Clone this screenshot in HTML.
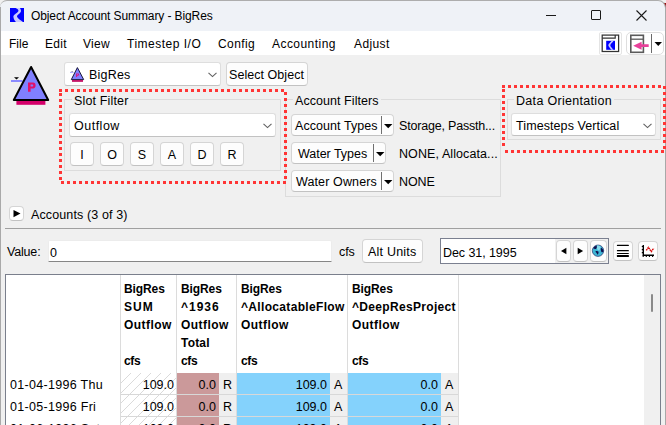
<!DOCTYPE html>
<html><head><meta charset="utf-8">
<style>
*{box-sizing:border-box;margin:0;padding:0}
html,body{width:666px;height:425px;overflow:hidden;background:#f0f0f0}
body{position:relative;font-family:"Liberation Sans",sans-serif;font-size:12px;color:#000}
.a{position:absolute}
.t{position:absolute;white-space:nowrap;line-height:14px}
.b{font-weight:bold}
.btn{position:absolute;background:#fdfdfd;border:1px solid #d5d5d5;border-bottom-color:#c2c2c2;border-radius:4px}
.grp{position:absolute;border:1px solid #dcdcdc}
.cb{position:absolute;background:#fff;border:1px solid #dedede;border-bottom-color:#c2c2c2;border-radius:3px}
svg{position:absolute;overflow:visible}
</style></head><body>
<div class="a" style="left:659px;top:3px;width:7px;height:7px;background:#9a0e0e"></div>
<div class="a" style="left:0;top:0;width:666px;height:31px;background:#eff2f7;border-top:1px solid #adadad;border-right:1px solid #a8a8a8;border-radius:7px 8px 0 0"></div>
<svg style="left:10px;top:8px" width="14" height="14" viewBox="0 0 14 14"><rect width="14" height="14" fill="#0000ff"/>
<path d="M5.6 0 C7.5 1,9.2 2,8.2 3.6 C6.5 5.6,3.2 6.8,3.4 9 C3.6 11,5 13,5.9 14 L13 14 C10.5 12.2,7.2 10.4,7 8.6 C6.9 6.9,11 5.3,11 3.1 C11 1.6,10.2 0.6,10 0 Z" fill="#c9c9ff"/></svg>
<div class="t" style="left:31px;top:9px;letter-spacing:-0.1px">Object Account Summary - BigRes</div>
<div class="a" style="left:546px;top:15px;width:10px;height:1px;background:#1a1a1a"></div>
<div class="a" style="left:591px;top:10px;width:10px;height:10px;border:1px solid #1a1a1a;border-radius:1px"></div>
<svg style="left:636px;top:10px" width="11" height="11" viewBox="0 0 11 11"><path d="M0.5 0.5L10.5 10.5M10.5 0.5L0.5 10.5" stroke="#1a1a1a" stroke-width="1.1"/></svg>
<div class="a" style="left:1px;top:31px;width:665px;height:24px;background:#fff"></div>
<div class="t" style="left:9px;top:37px;letter-spacing:0.0px">File</div>
<div class="t" style="left:45px;top:37px;letter-spacing:0.3px">Edit</div>
<div class="t" style="left:83px;top:37px;letter-spacing:0.3px">View</div>
<div class="t" style="left:127px;top:37px;letter-spacing:0.5px">Timestep I/O</div>
<div class="t" style="left:218px;top:37px;letter-spacing:0.4px">Config</div>
<div class="t" style="left:272px;top:37px;letter-spacing:0.45px">Accounting</div>
<div class="t" style="left:354px;top:37px;letter-spacing:0.4px">Adjust</div>
<div class="a" style="left:599px;top:32px;width:23px;height:23px;border:1px solid #e4e4e4;border-radius:2px;background:#fff"></div>
<svg style="left:601px;top:34px" width="19" height="19" viewBox="0 0 19 19">
<rect x="1.2" y="1.1" width="16.4" height="16.4" fill="#fff" stroke="#333" stroke-width="1.25"/>
<path d="M1.2 4.2H14.2V1.1" fill="none" stroke="#333" stroke-width="1.2"/>
<rect x="5.2" y="6.8" width="8.8" height="9" fill="#0000ff"/>
<path d="M10.6 6.8L12.6 6.8C11.8 8.5,9.5 9.8,9.3 11.2C9.3 12.6,11.5 14.5,12.4 15.8L10.3 15.8C9.5 14.6,7.3 12.5,7.3 11.2C7.4 9.6,10 8.2,10.6 6.8Z" fill="#c9c9ff"/>
</svg>
<div class="a" style="left:626px;top:32px;width:38px;height:23px;border:1px solid #dedede;border-radius:5px;background:#fff"></div>
<svg style="left:629px;top:34px" width="36" height="20" viewBox="0 0 36 20">
<rect x="1.8" y="1.3" width="12.6" height="17" fill="#fff" stroke="#5a5a5a" stroke-width="1.6"/>
<line x1="1.8" y1="5.2" x2="14.4" y2="5.2" stroke="#5a5a5a" stroke-width="1.3"/>
<path d="M4.2 11.7L12.6 7.8V10.3H19.7V12.9H12.6V15.7Z" fill="#e8409a"/>
<line x1="22.5" y1="0" x2="22.5" y2="19" stroke="#6a6a6a" stroke-width="1"/>
<path d="M25.5 8H33L29.25 12Z" fill="#000"/>
</svg>
<svg style="left:0px;top:60px" width="55" height="50" viewBox="0 0 55 50">
<line x1="11" y1="21" x2="22.5" y2="21" stroke="#8c8cff" stroke-width="2"/>
<path d="M14 17.2H19L16.5 19.4Z" fill="#000"/>
<path d="M31.1 7L48.2 40H13.8Z" fill="#8080ff" stroke="#000" stroke-width="2" stroke-linejoin="round"/>
<rect x="16.4" y="41" width="29" height="3.8" fill="#d4006a"/>
<path fill-rule="evenodd" d="M28 22.6H33C34.8 22.6,35.6 23.8,35.6 25.5C35.6 27.2,34.8 28.4,33 28.4H30.6V31.8H28ZM30.6 24.5H32.5C33 24.5,33.2 24.9,33.2 25.5C33.2 26.1,33 26.5,32.5 26.5H30.6Z" fill="#e0106a"/>
</svg>
<div class="cb" style="left:64px;top:62px;width:157px;height:24px"></div>
<svg style="left:68px;top:65px" width="20" height="18" viewBox="0 0 20 18">
<line x1="2" y1="7.4" x2="5.5" y2="7.4" stroke="#b0b0ff" stroke-width="1.2"/>
<path d="M3.2 6.2H5L4.1 7Z" fill="#404040"/>
<path d="M9.4 2.6L15.7 14.6H3.3Z" fill="#8080ff" stroke="#1a1a40" stroke-width="1" stroke-linejoin="round"/>
<rect x="4" y="15.1" width="11" height="1.7" fill="#c0005a"/>
<path fill-rule="evenodd" d="M8.1 8.4H10C10.7 8.4,11.1 8.9,11.1 9.6C11.1 10.3,10.7 10.8,10 10.8H9.1V12H8.1ZM9.1 9.2H9.8C10 9.2,10.1 9.4,10.1 9.6C10.1 9.8,10 10,9.8 10H9.1Z" fill="#e0107a"/>
</svg>
<div class="t" style="left:89px;top:68px;font-size:12.5px;letter-spacing:0.2px">BigRes</div>
<svg style="left:208px;top:72px" width="9" height="6" viewBox="0 0 9 6"><path d="M0.5 0.8L4.5 4.6L8.5 0.8" fill="none" stroke="#606060" stroke-width="1.1"/></svg>
<div class="btn" style="left:226px;top:62px;width:82px;height:24px"></div>
<div class="t" style="left:229px;top:68px;font-size:12.5px;letter-spacing:0.05px">Select Object</div>
<div class="grp" style="left:64px;top:99px;width:217px;height:72px"></div>
<div class="a" style="left:72px;top:96px;width:58px;height:6px;background:#f0f0f0"></div>
<div class="t" style="left:74px;top:94px;font-size:12.5px;letter-spacing:0.15px">Slot Filter</div>
<div class="cb" style="left:69px;top:113px;width:207px;height:24px"></div>
<div class="t" style="left:74px;top:119px;font-size:12.5px;letter-spacing:0.5px">Outflow</div>
<svg style="left:263px;top:123px" width="9" height="6" viewBox="0 0 9 6"><path d="M0.5 0.8L4.5 4.6L8.5 0.8" fill="none" stroke="#606060" stroke-width="1.1"/></svg>
<div class="btn" style="left:70px;top:142px;width:24px;height:24px"></div>
<div class="t" style="left:70px;top:148px;width:24px;text-align:center;font-size:12.5px">I</div>
<div class="btn" style="left:100px;top:142px;width:24px;height:24px"></div>
<div class="t" style="left:100px;top:148px;width:24px;text-align:center;font-size:12.5px">O</div>
<div class="btn" style="left:130px;top:142px;width:24px;height:24px"></div>
<div class="t" style="left:130px;top:148px;width:24px;text-align:center;font-size:12.5px">S</div>
<div class="btn" style="left:160px;top:142px;width:24px;height:24px"></div>
<div class="t" style="left:160px;top:148px;width:24px;text-align:center;font-size:12.5px">A</div>
<div class="btn" style="left:190px;top:142px;width:24px;height:24px"></div>
<div class="t" style="left:190px;top:148px;width:24px;text-align:center;font-size:12.5px">D</div>
<div class="btn" style="left:220px;top:142px;width:24px;height:24px"></div>
<div class="t" style="left:220px;top:148px;width:24px;text-align:center;font-size:12.5px">R</div>
<div class="grp" style="left:285px;top:99px;width:216px;height:98px"></div>
<div class="a" style="left:293px;top:96px;width:88px;height:6px;background:#f0f0f0"></div>
<div class="t" style="left:295px;top:94px;font-size:12.5px;letter-spacing:0.06px">Account Filters</div>
<div class="btn" style="left:291px;top:114px;width:103px;height:22px"></div>
<div class="a" style="left:381px;top:116px;width:1px;height:18px;background:#707070"></div>
<svg style="left:384px;top:124px" width="9" height="5" viewBox="0 0 9 5"><path d="M0 0H8.4L4.2 4.3Z" fill="#000"/></svg>
<div class="t" style="left:295px;top:119px;font-size:12.5px;letter-spacing:0.07px">Account Types</div>
<div class="t" style="left:399px;top:119px;font-size:12.5px;letter-spacing:-0.19px">Storage, Passth...</div>
<div class="btn" style="left:291px;top:142px;width:95px;height:22px"></div>
<div class="a" style="left:373px;top:144px;width:1px;height:18px;background:#707070"></div>
<svg style="left:376px;top:152px" width="9" height="5" viewBox="0 0 9 5"><path d="M0 0H8.4L4.2 4.3Z" fill="#000"/></svg>
<div class="t" style="left:298px;top:147px;font-size:12.5px;letter-spacing:-0.03px">Water Types</div>
<div class="t" style="left:399px;top:147px;font-size:12.5px;letter-spacing:0.09px">NONE, Allocata...</div>
<div class="btn" style="left:291px;top:170px;width:103px;height:22px"></div>
<div class="a" style="left:381px;top:172px;width:1px;height:18px;background:#707070"></div>
<svg style="left:384px;top:180px" width="9" height="5" viewBox="0 0 9 5"><path d="M0 0H8.4L4.2 4.3Z" fill="#000"/></svg>
<div class="t" style="left:296px;top:175px;font-size:12.5px;letter-spacing:0.12px">Water Owners</div>
<div class="t" style="left:399px;top:175px;font-size:12.5px;letter-spacing:-0.08px">NONE</div>
<div class="grp" style="left:507px;top:99px;width:154px;height:41px"></div>
<div class="a" style="left:514px;top:96px;width:100px;height:6px;background:#f0f0f0"></div>
<div class="t" style="left:516px;top:94px;font-size:12.5px;letter-spacing:0.31px">Data Orientation</div>
<div class="cb" style="left:511px;top:113px;width:145px;height:23px"></div>
<div class="t" style="left:516px;top:119px;font-size:12.5px;letter-spacing:0.09px">Timesteps Vertical</div>
<svg style="left:643px;top:123px" width="9" height="6" viewBox="0 0 9 6"><path d="M0.5 0.8L4.5 4.6L8.5 0.8" fill="none" stroke="#606060" stroke-width="1.1"/></svg>
<svg style="left:0;top:0;z-index:10" width="666" height="425" viewBox="0 0 666 425"><g fill="#ff3535"><rect x="59" y="89" width="3" height="3"/><rect x="65" y="89" width="3" height="3"/><rect x="71" y="89" width="3" height="3"/><rect x="77" y="89" width="3" height="3"/><rect x="83" y="89" width="3" height="3"/><rect x="89" y="89" width="3" height="3"/><rect x="95" y="89" width="3" height="3"/><rect x="101" y="89" width="3" height="3"/><rect x="107" y="89" width="3" height="3"/><rect x="113" y="89" width="3" height="3"/><rect x="119" y="89" width="3" height="3"/><rect x="125" y="89" width="3" height="3"/><rect x="131" y="89" width="3" height="3"/><rect x="137" y="89" width="3" height="3"/><rect x="143" y="89" width="3" height="3"/><rect x="149" y="89" width="3" height="3"/><rect x="155" y="89" width="3" height="3"/><rect x="161" y="89" width="3" height="3"/><rect x="167" y="89" width="3" height="3"/><rect x="173" y="89" width="3" height="3"/><rect x="179" y="89" width="3" height="3"/><rect x="185" y="89" width="3" height="3"/><rect x="191" y="89" width="3" height="3"/><rect x="197" y="89" width="3" height="3"/><rect x="203" y="89" width="3" height="3"/><rect x="209" y="89" width="3" height="3"/><rect x="215" y="89" width="3" height="3"/><rect x="221" y="89" width="3" height="3"/><rect x="227" y="89" width="3" height="3"/><rect x="233" y="89" width="3" height="3"/><rect x="239" y="89" width="3" height="3"/><rect x="245" y="89" width="3" height="3"/><rect x="251" y="89" width="3" height="3"/><rect x="257" y="89" width="3" height="3"/><rect x="263" y="89" width="3" height="3"/><rect x="269" y="89" width="3" height="3"/><rect x="275" y="89" width="3" height="3"/><rect x="281" y="89" width="3" height="3"/><rect x="284" y="92" width="3" height="3"/><rect x="284" y="98" width="3" height="3"/><rect x="284" y="104" width="3" height="3"/><rect x="284" y="110" width="3" height="3"/><rect x="284" y="116" width="3" height="3"/><rect x="284" y="122" width="3" height="3"/><rect x="284" y="128" width="3" height="3"/><rect x="284" y="134" width="3" height="3"/><rect x="284" y="140" width="3" height="3"/><rect x="284" y="146" width="3" height="3"/><rect x="284" y="152" width="3" height="3"/><rect x="284" y="158" width="3" height="3"/><rect x="284" y="164" width="3" height="3"/><rect x="284" y="170" width="3" height="3"/><rect x="284" y="176" width="3" height="3"/><rect x="283" y="181" width="3" height="3"/><rect x="277" y="181" width="3" height="3"/><rect x="271" y="181" width="3" height="3"/><rect x="265" y="181" width="3" height="3"/><rect x="259" y="181" width="3" height="3"/><rect x="253" y="181" width="3" height="3"/><rect x="247" y="181" width="3" height="3"/><rect x="241" y="181" width="3" height="3"/><rect x="235" y="181" width="3" height="3"/><rect x="229" y="181" width="3" height="3"/><rect x="223" y="181" width="3" height="3"/><rect x="217" y="181" width="3" height="3"/><rect x="211" y="181" width="3" height="3"/><rect x="205" y="181" width="3" height="3"/><rect x="199" y="181" width="3" height="3"/><rect x="193" y="181" width="3" height="3"/><rect x="187" y="181" width="3" height="3"/><rect x="181" y="181" width="3" height="3"/><rect x="175" y="181" width="3" height="3"/><rect x="169" y="181" width="3" height="3"/><rect x="163" y="181" width="3" height="3"/><rect x="157" y="181" width="3" height="3"/><rect x="151" y="181" width="3" height="3"/><rect x="145" y="181" width="3" height="3"/><rect x="139" y="181" width="3" height="3"/><rect x="133" y="181" width="3" height="3"/><rect x="127" y="181" width="3" height="3"/><rect x="121" y="181" width="3" height="3"/><rect x="115" y="181" width="3" height="3"/><rect x="109" y="181" width="3" height="3"/><rect x="103" y="181" width="3" height="3"/><rect x="97" y="181" width="3" height="3"/><rect x="91" y="181" width="3" height="3"/><rect x="85" y="181" width="3" height="3"/><rect x="79" y="181" width="3" height="3"/><rect x="73" y="181" width="3" height="3"/><rect x="67" y="181" width="3" height="3"/><rect x="61" y="181" width="3" height="3"/><rect x="59" y="93" width="3" height="3"/><rect x="59" y="99" width="3" height="3"/><rect x="59" y="105" width="3" height="3"/><rect x="59" y="111" width="3" height="3"/><rect x="59" y="117" width="3" height="3"/><rect x="59" y="123" width="3" height="3"/><rect x="59" y="129" width="3" height="3"/><rect x="59" y="135" width="3" height="3"/><rect x="59" y="141" width="3" height="3"/><rect x="59" y="147" width="3" height="3"/><rect x="59" y="153" width="3" height="3"/><rect x="59" y="159" width="3" height="3"/><rect x="59" y="165" width="3" height="3"/><rect x="59" y="171" width="3" height="3"/><rect x="59" y="177" width="3" height="3"/><rect x="502" y="85" width="3" height="3"/><rect x="508" y="85" width="3" height="3"/><rect x="514" y="85" width="3" height="3"/><rect x="520" y="85" width="3" height="3"/><rect x="526" y="85" width="3" height="3"/><rect x="532" y="85" width="3" height="3"/><rect x="538" y="85" width="3" height="3"/><rect x="544" y="85" width="3" height="3"/><rect x="550" y="85" width="3" height="3"/><rect x="556" y="85" width="3" height="3"/><rect x="562" y="85" width="3" height="3"/><rect x="568" y="85" width="3" height="3"/><rect x="574" y="85" width="3" height="3"/><rect x="580" y="85" width="3" height="3"/><rect x="586" y="85" width="3" height="3"/><rect x="592" y="85" width="3" height="3"/><rect x="598" y="85" width="3" height="3"/><rect x="604" y="85" width="3" height="3"/><rect x="610" y="85" width="3" height="3"/><rect x="616" y="85" width="3" height="3"/><rect x="622" y="85" width="3" height="3"/><rect x="628" y="85" width="3" height="3"/><rect x="634" y="85" width="3" height="3"/><rect x="640" y="85" width="3" height="3"/><rect x="646" y="85" width="3" height="3"/><rect x="652" y="85" width="3" height="3"/><rect x="658" y="85" width="3" height="3"/><rect x="663" y="86" width="3" height="3"/><rect x="663" y="92" width="3" height="3"/><rect x="663" y="98" width="3" height="3"/><rect x="663" y="104" width="3" height="3"/><rect x="663" y="110" width="3" height="3"/><rect x="663" y="116" width="3" height="3"/><rect x="663" y="122" width="3" height="3"/><rect x="663" y="128" width="3" height="3"/><rect x="663" y="134" width="3" height="3"/><rect x="663" y="140" width="3" height="3"/><rect x="663" y="146" width="3" height="3"/><rect x="661" y="150" width="3" height="3"/><rect x="655" y="150" width="3" height="3"/><rect x="649" y="150" width="3" height="3"/><rect x="643" y="150" width="3" height="3"/><rect x="637" y="150" width="3" height="3"/><rect x="631" y="150" width="3" height="3"/><rect x="625" y="150" width="3" height="3"/><rect x="619" y="150" width="3" height="3"/><rect x="613" y="150" width="3" height="3"/><rect x="607" y="150" width="3" height="3"/><rect x="601" y="150" width="3" height="3"/><rect x="595" y="150" width="3" height="3"/><rect x="589" y="150" width="3" height="3"/><rect x="583" y="150" width="3" height="3"/><rect x="577" y="150" width="3" height="3"/><rect x="571" y="150" width="3" height="3"/><rect x="565" y="150" width="3" height="3"/><rect x="559" y="150" width="3" height="3"/><rect x="553" y="150" width="3" height="3"/><rect x="547" y="150" width="3" height="3"/><rect x="541" y="150" width="3" height="3"/><rect x="535" y="150" width="3" height="3"/><rect x="529" y="150" width="3" height="3"/><rect x="523" y="150" width="3" height="3"/><rect x="517" y="150" width="3" height="3"/><rect x="511" y="150" width="3" height="3"/><rect x="505" y="150" width="3" height="3"/><rect x="502" y="89" width="3" height="3"/><rect x="502" y="95" width="3" height="3"/><rect x="502" y="101" width="3" height="3"/><rect x="502" y="107" width="3" height="3"/><rect x="502" y="113" width="3" height="3"/><rect x="502" y="119" width="3" height="3"/><rect x="502" y="125" width="3" height="3"/><rect x="502" y="131" width="3" height="3"/><rect x="502" y="137" width="3" height="3"/><rect x="502" y="143" width="3" height="3"/></g></svg>
<div class="btn" style="left:9px;top:206px;width:15px;height:15px;background:#fff"></div>
<svg style="left:13px;top:210px" width="8" height="8" viewBox="0 0 8 8"><path d="M0.5 0V7.2L7.5 3.6Z" fill="#000"/></svg>
<div class="t" style="left:31px;top:208px;font-size:12.5px;letter-spacing:0.12px">Accounts (3 of 3)</div>
<div class="a" style="left:5px;top:228px;width:656px;height:1px;background:#a0a0a0"></div>
<div class="t" style="left:7px;top:245px;font-size:12.5px;letter-spacing:-0.18px">Value:</div>
<div class="a" style="left:48px;top:240px;width:284px;height:22px;background:#fff;border:1px solid #ececec;border-bottom:1px solid #868686;border-radius:2px 2px 0 0"></div>
<div class="t" style="left:50px;top:246px;font-size:12.5px">0</div>
<div class="t" style="left:339px;top:245px;font-size:12.5px;letter-spacing:-0.1px">cfs</div>
<div class="btn" style="left:362px;top:239px;width:61px;height:24px"></div>
<div class="t" style="left:368px;top:245px;font-size:12.5px;letter-spacing:0.21px">Alt Units</div>
<div class="a" style="left:440px;top:238px;width:169px;height:26px;background:#fff;border:1px solid #7b8090"></div>
<div class="a" style="left:555px;top:239px;width:53px;height:24px;background:#f0f0f0"></div>
<div class="t" style="left:443px;top:246px;font-size:12.5px;letter-spacing:-0.07px">Dec 31, 1995</div>
<div class="btn" style="left:556px;top:240px;width:15px;height:22px"></div>
<div class="btn" style="left:573px;top:240px;width:15px;height:22px"></div>
<div class="btn" style="left:590px;top:240px;width:17px;height:22px"></div>
<svg style="left:561px;top:248px" width="6" height="7" viewBox="0 0 6 7"><path d="M5.4 -0.2V6.3L0 3.05Z" fill="#000"/></svg>
<svg style="left:577px;top:248px" width="7" height="7" viewBox="0 0 7 7"><path d="M0.7 -0.2V6.3L6.1 3.05Z" fill="#000"/></svg>
<svg style="left:591px;top:244px" width="14" height="14" viewBox="0 0 14 14">
<circle cx="7" cy="6.7" r="5.7" fill="#3eb6d6" stroke="#1c1c5c" stroke-width="0.6"/>
<path d="M6 1.6C7.5 1.4,9 2,9.8 3.2C9.5 4.6,8.6 5.6,8.2 6.8C7.2 6.5,6.3 5.6,5.8 4.5Z" fill="#86dcec"/>
<path d="M2.2 4.2C3 2.8,4.2 1.8,5.8 1.4C5.6 2.6,6.2 3.4,5.4 4.4C4.6 5.2,3.4 5.2,2.2 4.2Z" fill="#10104e"/>
<path d="M10 3.6C11.2 4.4,12.4 5.6,12.6 7C12.2 8.2,11.2 8.6,10.4 8C10 6.8,9.4 5,10 3.6Z" fill="#10104e"/>
<path d="M4.6 7.2C5.6 6.8,7 7,7.6 7.8C7.6 9,7.2 10.2,6.6 10.8C6 10,5.6 9.2,5.2 8.6C4.8 8.2,4.4 7.8,4.6 7.2Z" fill="#10104e"/>
</svg>
<div class="btn" style="left:613px;top:241px;width:20px;height:20px"></div>
<svg style="left:616px;top:244px" width="14" height="13" viewBox="0 0 14 13">
<rect x="0.9" y="0.8" width="12" height="1.3" rx="0.5" fill="#000"/>
<rect x="0.9" y="5.9" width="12" height="1.3" rx="0.5" fill="#000"/>
<rect x="0.9" y="8.9" width="12" height="1.2" rx="0.5" fill="#000"/>
<rect x="0.9" y="11" width="12" height="1.9" rx="0.5" fill="#000"/>
</svg>
<div class="btn" style="left:638px;top:241px;width:20px;height:20px"></div>
<svg style="left:641px;top:244px" width="14" height="14" viewBox="0 0 14 14">
<path d="M2.3 1V11.3H13" fill="none" stroke="#000" stroke-width="1.4"/>
<path d="M0.8 2.5H2.3M0.8 5.6H2.3M0.8 8.6H2.3M2.2 11.3V12.9M5.3 11.3V12.9M8.4 11.3V12.9M11.6 11.3V12.9" stroke="#000" stroke-width="1.1"/>
<path d="M5.3 6.4L7.4 3.4L10.3 7.6L12.7 4.3" fill="none" stroke="#d80000" stroke-width="1.4" stroke-dasharray="1.6 0.5"/>
</svg>
<div class="a" style="left:5px;top:274px;width:656px;height:160px;background:#fff;border:1px solid #7a7f8c"></div>
<div class="a" style="left:644px;top:275px;width:16px;height:150px;background:#f0f0f0"></div>
<div class="a" style="left:651px;top:294px;width:2px;height:18px;background:#8a8a8a;border-radius:1px"></div>
<div class="a" style="left:120px;top:275px;width:1px;height:150px;background:#dcdcdc"></div>
<div class="a" style="left:176px;top:275px;width:1px;height:150px;background:#dcdcdc"></div>
<div class="a" style="left:236px;top:275px;width:1px;height:150px;background:#dcdcdc"></div>
<div class="a" style="left:347px;top:275px;width:1px;height:150px;background:#dcdcdc"></div>
<div class="a" style="left:458px;top:275px;width:1px;height:150px;background:#dcdcdc"></div>
<div class="t" style="left:124px;top:282px;font-weight:bold;letter-spacing:-0.1px">BigRes</div>
<div class="t" style="left:124px;top:300px;font-weight:bold;letter-spacing:1.0px">SUM</div>
<div class="t" style="left:124px;top:318px;font-weight:bold;letter-spacing:0.45px">Outflow</div>
<div class="t" style="left:124px;top:354px;font-weight:bold;letter-spacing:-0.3px">cfs</div>
<div class="t" style="left:181px;top:282px;font-weight:bold;letter-spacing:-0.1px">BigRes</div>
<div class="t" style="left:181px;top:300px;font-weight:bold;letter-spacing:1.0px">^1936</div>
<div class="t" style="left:181px;top:318px;font-weight:bold;letter-spacing:0.45px">Outflow</div>
<div class="t" style="left:181px;top:336px;font-weight:bold;letter-spacing:0.2px">Total</div>
<div class="t" style="left:181px;top:354px;font-weight:bold;letter-spacing:-0.3px">cfs</div>
<div class="t" style="left:241px;top:282px;font-weight:bold;letter-spacing:-0.1px">BigRes</div>
<div class="t" style="left:241px;top:300px;font-weight:bold;letter-spacing:0.33px">^AllocatableFlow</div>
<div class="t" style="left:241px;top:318px;font-weight:bold;letter-spacing:0.45px">Outflow</div>
<div class="t" style="left:241px;top:354px;font-weight:bold;letter-spacing:-0.3px">cfs</div>
<div class="t" style="left:352px;top:282px;font-weight:bold;letter-spacing:-0.1px">BigRes</div>
<div class="t" style="left:352px;top:300px;font-weight:bold;letter-spacing:0.32px">^DeepResProject</div>
<div class="t" style="left:352px;top:318px;font-weight:bold;letter-spacing:0.45px">Outflow</div>
<div class="t" style="left:352px;top:354px;font-weight:bold;letter-spacing:-0.3px">cfs</div>
<svg style="left:121px;top:373px" width="55" height="52" viewBox="0 0 55 52">
<defs><pattern id="hp" width="10" height="10" patternUnits="userSpaceOnUse" x="0" y="0">
<path d="M-1 1L1 -1M0 10L10 0M9 11L11 9" stroke="#d6d6d6" stroke-width="0.9"/></pattern></defs>
<rect width="55" height="52" fill="url(#hp)"/></svg>
<div class="a" style="left:177px;top:373px;width:42px;height:21px;background:#cb999a"></div>
<div class="a" style="left:219px;top:373px;width:17px;height:21px;background:#efefef"></div>
<div class="a" style="left:237px;top:373px;width:93px;height:21px;background:#84d2fc"></div>
<div class="a" style="left:330px;top:373px;width:17px;height:21px;background:#efefef"></div>
<div class="a" style="left:348px;top:373px;width:93px;height:21px;background:#84d2fc"></div>
<div class="a" style="left:441px;top:373px;width:17px;height:21px;background:#efefef"></div>
<div class="a" style="left:121px;top:394px;width:337px;height:1px;background:#d8d8d8"></div>
<div class="a" style="left:177px;top:395px;width:42px;height:21px;background:#cb999a"></div>
<div class="a" style="left:219px;top:395px;width:17px;height:21px;background:#efefef"></div>
<div class="a" style="left:237px;top:395px;width:93px;height:21px;background:#84d2fc"></div>
<div class="a" style="left:330px;top:395px;width:17px;height:21px;background:#efefef"></div>
<div class="a" style="left:348px;top:395px;width:93px;height:21px;background:#84d2fc"></div>
<div class="a" style="left:441px;top:395px;width:17px;height:21px;background:#efefef"></div>
<div class="a" style="left:121px;top:416px;width:337px;height:1px;background:#d8d8d8"></div>
<div class="a" style="left:177px;top:417px;width:42px;height:21px;background:#cb999a"></div>
<div class="a" style="left:219px;top:417px;width:17px;height:21px;background:#efefef"></div>
<div class="a" style="left:237px;top:417px;width:93px;height:21px;background:#84d2fc"></div>
<div class="a" style="left:330px;top:417px;width:17px;height:21px;background:#efefef"></div>
<div class="a" style="left:348px;top:417px;width:93px;height:21px;background:#84d2fc"></div>
<div class="a" style="left:441px;top:417px;width:17px;height:21px;background:#efefef"></div>
<div class="a" style="left:121px;top:438px;width:337px;height:1px;background:#d8d8d8"></div>
<div class="t" style="left:10px;top:378px;font-size:12.5px;letter-spacing:0.3px">01-04-1996 Thu</div>
<div class="t" style="left:121px;top:378px;width:53px;text-align:right;font-size:12.5px">109.0</div>
<div class="t" style="left:177px;top:378px;width:39px;text-align:right;font-size:12.5px">0.0</div>
<div class="t" style="left:223px;top:378px;font-size:12.5px">R</div>
<div class="t" style="left:237px;top:378px;width:90px;text-align:right;font-size:12.5px">109.0</div>
<div class="t" style="left:334px;top:378px;font-size:12.5px">A</div>
<div class="t" style="left:348px;top:378px;width:90px;text-align:right;font-size:12.5px">0.0</div>
<div class="t" style="left:445px;top:378px;font-size:12.5px">A</div>
<div class="t" style="left:10px;top:400px;font-size:12.5px;letter-spacing:0.3px">01-05-1996 Fri</div>
<div class="t" style="left:121px;top:400px;width:53px;text-align:right;font-size:12.5px">109.0</div>
<div class="t" style="left:177px;top:400px;width:39px;text-align:right;font-size:12.5px">0.0</div>
<div class="t" style="left:223px;top:400px;font-size:12.5px">R</div>
<div class="t" style="left:237px;top:400px;width:90px;text-align:right;font-size:12.5px">109.0</div>
<div class="t" style="left:334px;top:400px;font-size:12.5px">A</div>
<div class="t" style="left:348px;top:400px;width:90px;text-align:right;font-size:12.5px">0.0</div>
<div class="t" style="left:445px;top:400px;font-size:12.5px">A</div>
<div class="t" style="left:10px;top:422px;font-size:12.5px;letter-spacing:0.3px">01-06-1996 Sat</div>
<div class="t" style="left:121px;top:422px;width:53px;text-align:right;font-size:12.5px">109.0</div>
<div class="t" style="left:177px;top:422px;width:39px;text-align:right;font-size:12.5px">0.0</div>
<div class="t" style="left:223px;top:422px;font-size:12.5px">R</div>
<div class="t" style="left:237px;top:422px;width:90px;text-align:right;font-size:12.5px">109.0</div>
<div class="t" style="left:334px;top:422px;font-size:12.5px">A</div>
<div class="t" style="left:348px;top:422px;width:90px;text-align:right;font-size:12.5px">0.0</div>
<div class="t" style="left:445px;top:422px;font-size:12.5px">A</div>
<div class="a" style="left:0;top:7px;width:1px;height:418px;background:#a9a9a9"></div>
<div class="a" style="left:665px;top:8px;width:1px;height:417px;background:#a8a8a8"></div>
</body></html>
